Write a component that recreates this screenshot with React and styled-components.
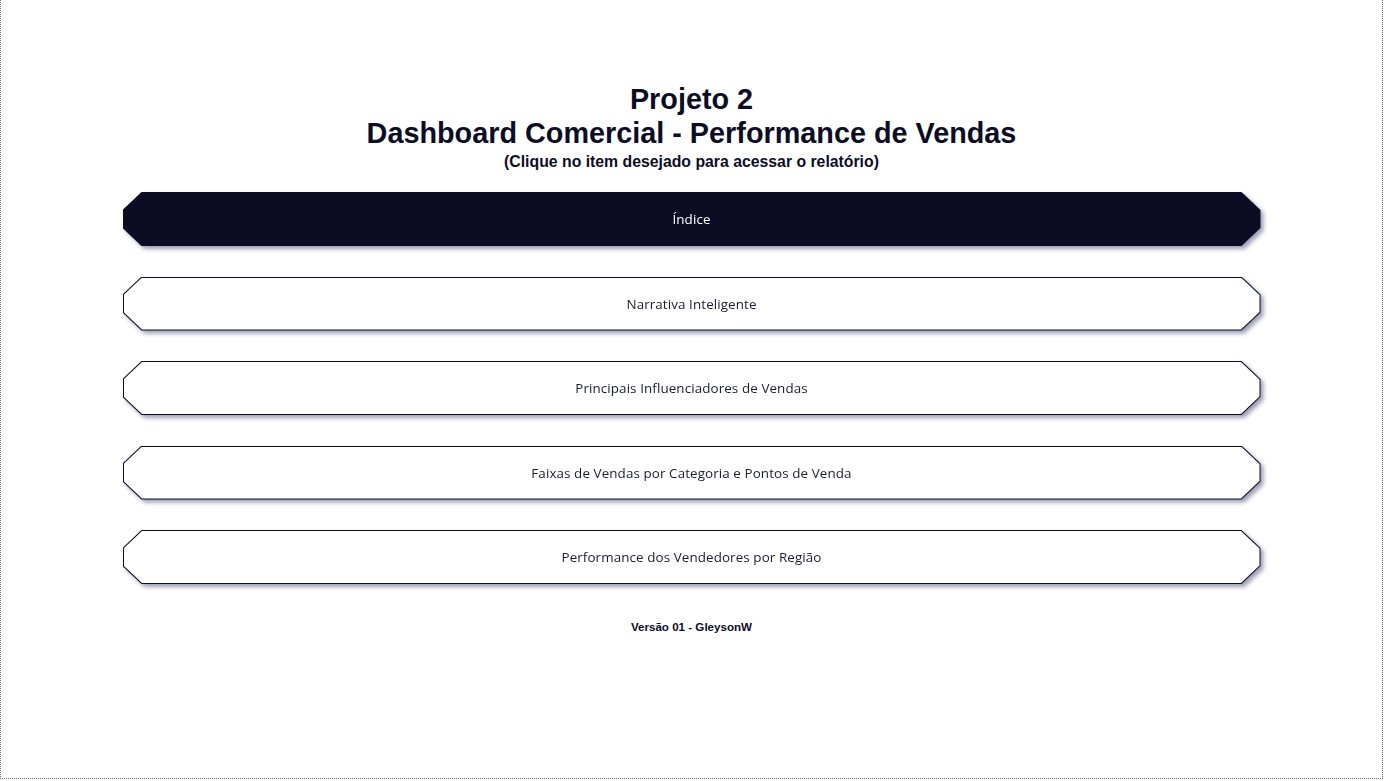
import React from 'react';
import styled, { createGlobalStyle } from 'styled-components'

const GlobalStyle = createGlobalStyle`
  html, body {
    margin: 0;
    padding: 0;
    background: #ffffff;
  }
`

const Frame = styled.div`
  box-sizing: border-box;
  width: 1383px;
  height: 779px;
  border: 1px dotted #6e6e6e;
  border-top: none;
  display: flex;
  flex-direction: column;
  align-items: center;
  padding-top: 82px;
  font-family: "Liberation Sans", Arial, sans-serif;
  color: #0c0d24;
`

const Title = styled.h1`
  margin: 0;
  font-size: 28.8px;
  line-height: 34px;
  font-weight: bold;
  text-align: center;
`

const Subtitle = styled.h2`
  margin: 0;
  font-size: 15.8px;
  line-height: 23px;
  font-weight: bold;
  text-align: center;
`

const Menu = styled.nav`
  display: flex;
  flex-direction: column;
  gap: 30.5px;
  margin-top: 19px;
  width: 1138px;
`

const octagon = `polygon(19px 0, calc(100% - 19px) 0, 100% 18px, 100% calc(100% - 18px), calc(100% - 19px) 100%, 19px 100%, 0 calc(100% - 18px), 0 18px)`

const ShadowWrap = styled.div`
  filter: drop-shadow(3px 3px 2px rgba(40, 42, 90, 0.45));
  cursor: pointer;
`

const Outline = styled.div`
  box-sizing: border-box;
  height: 54px;
  padding: 1px;
  background: #0c0d24;
  clip-path: ${octagon};
`

const Face = styled.div`
  height: 100%;
  display: flex;
  align-items: center;
  justify-content: center;
  background: ${p => (p.$active ? '#0c0d24' : '#ffffff')};
  color: ${p => (p.$active ? '#ffffff' : '#1a1b2e')};
  clip-path: polygon(18.5px 0, calc(100% - 18.5px) 0, 100% 17.5px, 100% calc(100% - 17.5px), calc(100% - 18.5px) 100%, 18.5px 100%, 0 calc(100% - 17.5px), 0 17.5px);
  font-family: "Open Sans", "Noto Sans", sans-serif;
  font-size: 13.4px;
  letter-spacing: 0.1px;
`

const Footer = styled.div`
  margin-top: 35px;
  font-size: 11.6px;
  line-height: 16px;
  font-weight: bold;
`

const items = [
  'Índice',
  'Narrativa Inteligente',
  'Principais Influenciadores de Vendas',
  'Faixas de Vendas por Categoria e Pontos de Venda',
  'Performance dos Vendedores por Região'
]

function App() {
  return (
    <>
      <GlobalStyle />
      <Frame>
        <Title>Projeto 2<br />Dashboard Comercial - Performance de Vendas</Title>
        <Subtitle>(Clique no item desejado para acessar o relatório)</Subtitle>
        <Menu>
          {items.map((item, index) => (
            <ShadowWrap key={index}>
              <Outline>
                <Face $active={index === 0}>{item}</Face>
              </Outline>
            </ShadowWrap>
          ))}
        </Menu>
        <Footer>Versão 01 - GleysonW</Footer>
      </Frame>
    </>
  );
}

export default App;
